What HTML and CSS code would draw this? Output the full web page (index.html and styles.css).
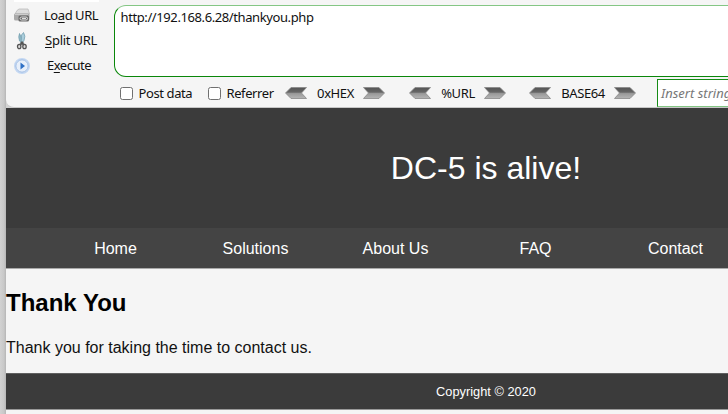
FILE: index.html
```html
<!DOCTYPE html>
<html lang="en">
<head>
<meta charset="utf-8">
<title>DC-5</title>
<link rel="stylesheet" href="styles.css">
</head>
<body>
<svg class="defs" width="0" height="0" aria-hidden="true">
  <defs>
    <linearGradient id="metal" x1="0" y1="0" x2="0" y2="1">
      <stop offset="0" stop-color="#555"/><stop offset=".42" stop-color="#666"/>
      <stop offset=".55" stop-color="#999"/><stop offset="1" stop-color="#b5b5b5"/>
    </linearGradient>
    <symbol id="arrow" viewBox="0 0 22 12"><path d="M.5.5H16L21.5 6 16 11.5H.5L5.5 6Z" fill="url(#metal)" stroke="#888" stroke-width=".8"/></symbol>
  </defs>
</svg>
<div class="window">
  <section class="toolbar">
    <div class="actions">
      <div class="action">
        <svg width="18" height="18" viewBox="0 0 18 18"><path d="M4 3.5 6 2h9l1.500 5H2Z" fill="#dedede" stroke="#b5b5b5" stroke-width=".7"/><rect x="1" y="6.500" width="15.500" height="7" rx="1.500" fill="#aaa"/><path d="M2 7.500h13" stroke="#ccc"/><rect x="5.500" y="8.500" width="10.500" height="6" rx="1.500" fill="#686868"/><rect x="7" y="10" width="7.500" height="3" rx="1.500" fill="none" stroke="#ddd"/><path d="M9 11.500h4" stroke="#ddd"/></svg>
        <span class="load">Lo<u>a</u>d URL</span>
      </div>
      <div class="action">
        <svg width="18" height="18" viewBox="0 0 18 18"><path d="M6.500 1.500Q5 4.500 6.500 9L10 12V9Z" fill="#91b9c7" stroke="#6d9aaa" stroke-width=".7"/><path d="M10.500.5Q13 4 11 8.500L8 12 8.500 3Z" fill="#aacddb" stroke="#6d9aaa" stroke-width=".7"/><path d="m8 10 3 3M10 10l-3 3" stroke="#555" stroke-width="2"/><ellipse cx="6.200" cy="14.500" rx="1.700" ry="2.200" fill="#ddd" stroke="#555" stroke-width="1.300"/><ellipse cx="11.500" cy="14.500" rx="1.700" ry="2.200" fill="#ddd" stroke="#555" stroke-width="1.300"/></svg>
        <span class="split"><u>S</u>plit URL</span>
      </div>
      <div class="action">
        <svg width="18" height="18" viewBox="0 0 18 18"><circle cx="9" cy="9" r="7.300" fill="#edf3fc" stroke="#c3d7f2" stroke-width="1.400"/><circle cx="9" cy="9" r="6.200" fill="#e7effa" stroke="#93b3df" stroke-width=".9"/><path d="m7.500 5.500 4.500 3.500-4.500 3.500Z" fill="#2f70c5"/></svg>
        <span class="execute">E<u>x</u>ecute</span>
      </div>
    </div>
    <div class="url">http://192.168.6.28/thankyou.php</div>
    <div class="options">
      <label class="option post"><input type="checkbox"><span>Post data</span></label>
      <label class="option referrer"><input type="checkbox"><span>Referrer</span></label>
      <div class="codec hex"><svg class="back" width="22" height="12"><use href="#arrow"/></svg><span>0xHEX</span><svg width="22" height="12"><use href="#arrow"/></svg></div>
      <div class="codec percent"><svg class="back" width="22" height="12"><use href="#arrow"/></svg><span>%URL</span><svg width="22" height="12"><use href="#arrow"/></svg></div>
      <div class="codec base"><svg class="back" width="22" height="12"><use href="#arrow"/></svg><span>BASE64</span><svg width="22" height="12"><use href="#arrow"/></svg></div>
      <div class="insert">Insert string</div>
    </div>
  </section>
  <main class="page">
    <header>DC-5 is alive!</header>
    <nav><a>Home</a><a>Solutions</a><a>About Us</a><a>FAQ</a><a>Contact</a></nav>
    <article><h2>Thank You</h2><p>Thank you for taking the time to contact us.</p></article>
    <footer>Copyright © 2020</footer>
  </main>
</div>
</body>
</html>
```
FILE: styles.css
```css
* { box-sizing: border-box; }
body {
  margin: 0;
  height: 414px;
  overflow: hidden;
  background: linear-gradient(90deg, #d2d2d2, #c8c8c8 4px, #b5b5b5 6px);
}
.defs { position: absolute; }
.window {
  margin-left: 6px;
  width: 960px;
  height: 414px;
  background: linear-gradient(#d2d2d2, #d2d2d2) 0 0 / 20px 108px no-repeat, #f5f5f5;
}
.toolbar {
  display: grid;
  grid-template-columns: 108px 1fr;
  grid-template-rows: 77px 30px;
  height: 108px;
  border-bottom: 1px solid #c6c6c6;
  border-bottom-left-radius: 8px;
  background: linear-gradient(#fff, #fff) 8px 0 / 85px 2px no-repeat, #f5f5f5;
  font: 13px/18px "Noto Sans", sans-serif;
  color: #111;
  white-space: nowrap;
}
.actions { padding: 7px 0 0 7px; }
.action { display: flex; height: 25px; }
.action span { flex: 1; padding-left: 13px; }
.action u { text-underline-offset: 2px; }
.action .load { letter-spacing: -.45px; }
.action .split { padding-left: 14px; letter-spacing: -.25px; }
.action .execute { padding-left: 16px; letter-spacing: -.5px; }
.action .load, .action .split, .action .execute { margin-top: -1px; }
.url {
  margin-top: 5px;
  height: 72px;
  padding: 2px 5.500px;
  border: 1px solid #0a870a;
  border-top-color: #84c684;
  border-radius: 12px 0 0 12px;
  background: #fff;
  letter-spacing: -.4px;
}
.options {
  grid-column: 1 / 3;
  display: flex;
  align-items: center;
  padding: 2px 0 0 114px;
}
.option { display: flex; align-items: center; gap: 5.500px; letter-spacing: -.4px; }
.option input {
  appearance: none;
  width: 13px;
  height: 13px;
  margin: 0;
  border: 1px solid #707070;
  border-radius: 2.5px;
  background: #fff;
}
.post { width: 88px; }
.referrer { width: 77px; }
.codec { display: flex; align-items: center; justify-content: space-between; letter-spacing: -.4px; }
.codec span { position: relative; left: .5px; }
.codec .back { transform: scaleX(-1); }
.hex { width: 100px; margin-right: 24px; }
.percent { width: 97px; margin-right: 23px; }
.base { width: 107px; margin-right: 21px; }
.insert {
  align-self: flex-start;
  width: 305px;
  height: 28px;
  padding: 4px 3px;
  border: 1px solid #168b16;
  border-bottom-color: #84c684;
  background: #fff;
  color: #777;
  font-style: italic;
}
.page { font-family: "Liberation Sans", Arial, sans-serif; }
header {
  height: 120px;
  background: #3b3b3b;
  color: #fff;
  font-size: 32px;
  line-height: 121px;
  text-align: center;
}
nav {
  display: flex;
  height: 41px;
  padding-left: 39.500px;
  border-bottom: 1px solid #aaa;
  background: #444;
  color: #fff;
  line-height: 42px;
}
nav a { width: 140px; text-align: center; }
article { height: 104px; }
h2 { margin: 0; padding-top: 20px; font-size: 24px; line-height: 28px; color: #000; }
p { margin: 0; padding-top: 21px; font-size: 16px; line-height: 20px; color: #111; }
footer {
  height: 37px;
  border-top: 1px solid #606060;
  border-bottom: 1px solid #999;
  background: #3b3b3b;
  color: #fff;
  font-size: 12.8px;
  line-height: 35px;
  text-align: center;
}
```
